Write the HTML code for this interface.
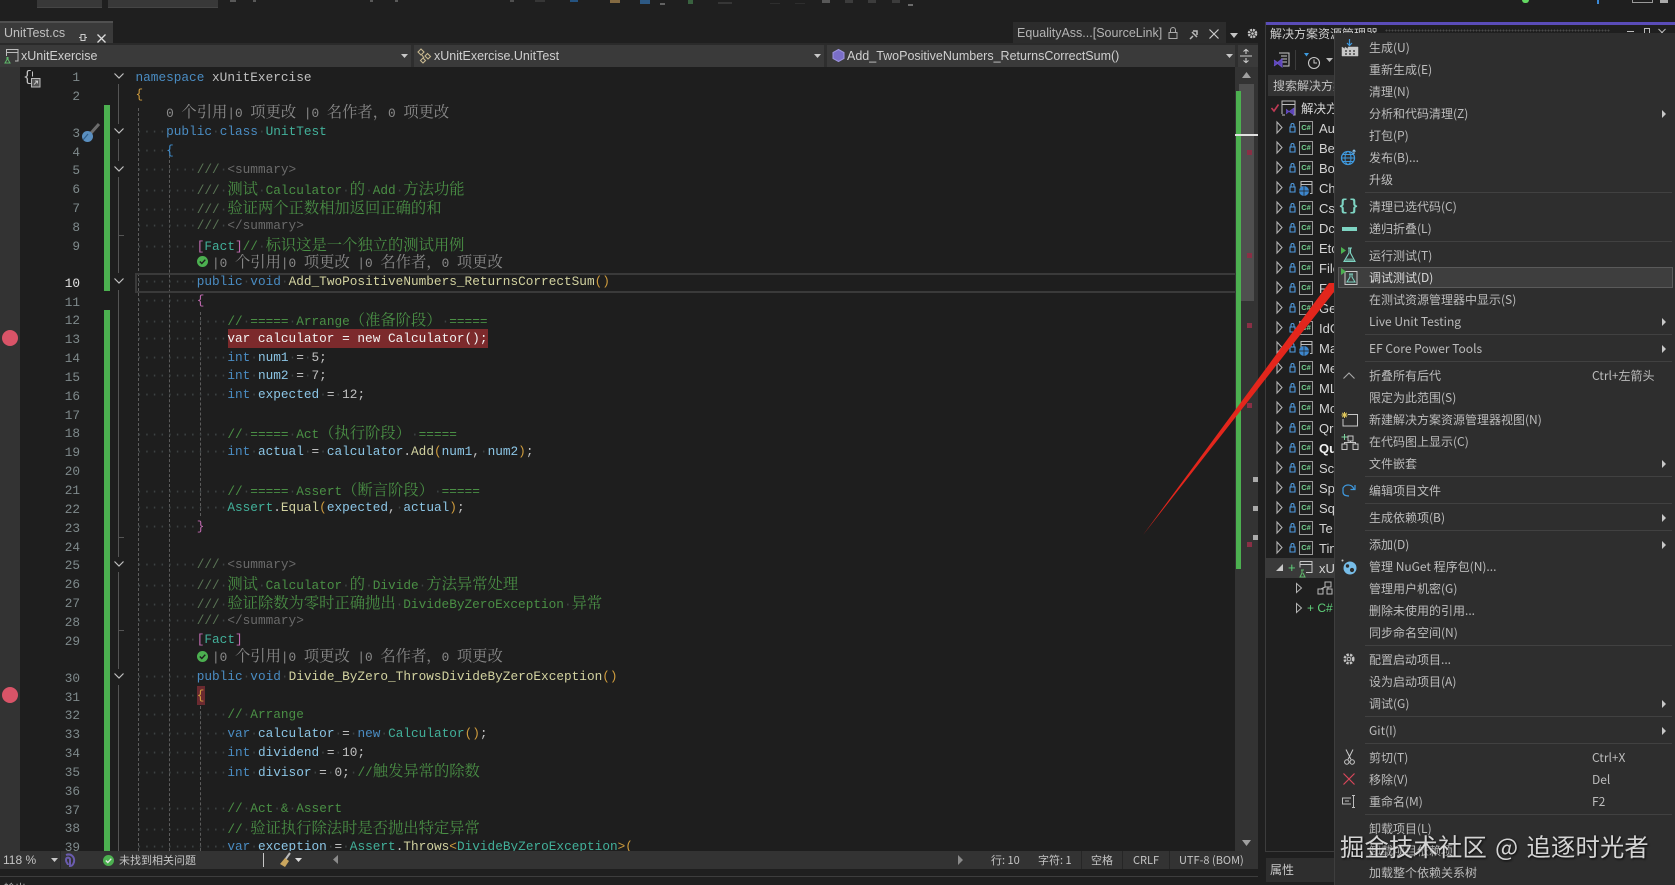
<!DOCTYPE html>
<html lang="zh"><head><meta charset="utf-8"><title>UnitTest.cs</title>
<style>
html,body{margin:0;padding:0;background:#1f1f1f}
#p{position:relative;width:1675px;height:885px;overflow:hidden;background:#1f1f1f;font-family:"Liberation Sans","Noto Sans CJK SC",sans-serif;color:#ccc}
.a{position:absolute}
svg{position:absolute;overflow:visible}
.l{position:absolute;left:135.5px;height:19px;margin-top:-1px;font:12.75px/19px "Liberation Mono","Noto Serif CJK SC",monospace;white-space:pre;color:#c0c0c0;text-spacing-trim:space-all}
.l i{font:15.3px/19px "Noto Serif CJK SC","Noto Sans CJK SC",serif;font-style:normal}
.l b{font-weight:normal;color:#3d4243}
.k{color:#4a8cc2}.t{color:#42b09a}.v{color:#8cc6e6}.m{color:#d2d2a0}.g{color:#4a8f45}.d{color:#5a7555}.x{color:#6a6a6a}.o{color:#cf9c3d}.q{color:#c06ab0}.u{color:#3f8fd0}.w{color:#c0c0c0}
.n{position:absolute;left:40px;width:40px;text-align:right;margin-top:.5px;font:12.75px/19px "Liberation Mono",monospace;color:#7f8a8c}
.z{color:#8a8a8a!important}
.z i{color:#8a8a8a}
.mi{position:absolute;left:1369px;height:22px;font:12px/22px "Noto Sans CJK SC","Liberation Sans",sans-serif;color:#bcbcbc;white-space:pre}
.sc{position:absolute;left:1592px;height:22px;font:12px/22px "Noto Sans CJK SC","Liberation Sans",sans-serif;color:#bcbcbc}
.ar{position:absolute;left:1662px;width:0;height:0;border-left:4px solid #c8c8c8;border-top:4px solid transparent;border-bottom:4px solid transparent}
.sp{position:absolute;left:1365px;width:307px;height:1px;background:#414141}
.tr{position:absolute;left:1319px;height:20px;margin-top:1px;font:13px/20px "Liberation Sans","Noto Sans CJK SC",sans-serif;color:#d4d4d4}
.cs{position:absolute;left:1299px;width:12px;height:12px;border:1px solid #9a9a9a;font:bold 7.5px/12px "Liberation Sans",sans-serif;color:#74d08e;text-align:center}
.st{position:absolute;font:11px/18px "Noto Sans CJK SC","Liberation Sans",sans-serif;color:#c4c4c4;white-space:pre;top:851px}
</style></head><body><div id="p">

<!-- top toolbar remnants -->
<div class="a" style="left:37px;top:0;width:65px;height:7px;background:#383838;border-bottom:1px solid #454545"></div>
<div class="a" style="left:108px;top:0;width:110px;height:7px;background:#383838;border-bottom:1px solid #454545"></div>
<div style="opacity:.55">
<div class="a" style="left:230px;top:0;width:6px;height:2px;background:#8a8a8a"></div>
<div class="a" style="left:253px;top:0;width:3px;height:2px;background:#8a8a8a"></div>
<div class="a" style="left:370px;top:0;width:3px;height:2px;background:#8a8a8a"></div>
<div class="a" style="left:395px;top:0;width:3px;height:2px;background:#8a8a8a"></div>
<div class="a" style="left:510px;top:0;width:4px;height:2px;background:#777"></div>
<div class="a" style="left:535px;top:0;width:10px;height:2px;background:#4a4a4a"></div>
<div class="a" style="left:570px;top:0;width:8px;height:2px;background:#2a7fd0"></div>
<div class="a" style="left:610px;top:0;width:10px;height:3px;background:#d8a860"></div>
<div class="a" style="left:640px;top:0;width:10px;height:4px;background:#3a8ad8"></div>
<div class="a" style="left:660px;top:3px;width:5px;height:2px;background:#999"></div>
<div class="a" style="left:688px;top:0;width:5px;height:4px;background:#4f9a5a"></div>
<div class="a" style="left:718px;top:2px;width:14px;height:2px;background:#4a4a4a"></div>
<div class="a" style="left:770px;top:3px;width:10px;height:1px;background:#3c3c3c"></div>
<div class="a" style="left:795px;top:3px;width:10px;height:1px;background:#3c3c3c"></div>
<div class="a" style="left:822px;top:0;width:8px;height:3px;background:#888"></div>
<div class="a" style="left:845px;top:0;width:8px;height:3px;background:#555"></div>
<div class="a" style="left:868px;top:0;width:8px;height:3px;background:#555"></div>
<div class="a" style="left:892px;top:0;width:8px;height:3px;background:#555"></div>
<div class="a" style="left:908px;top:4px;width:5px;height:2px;background:#aaa"></div>
</div>
<div class="a" style="left:1522px;top:0;width:7px;height:3px;background:#63d862;border-radius:0 0 4px 4px"></div>
<div class="a" style="left:1597px;top:0;width:2px;height:4px;background:#3a8ad8"></div>
<div class="a" style="left:1632px;top:0;width:19px;height:2px;border:1px solid #999;border-top:0"></div>
<div class="a" style="left:1660px;top:0;width:8px;height:3px;background:#aaa"></div>

<!-- tabs -->
<div class="a" style="left:0;top:21px;width:113px;height:22px;background:#3a3a3a;border-top:2px solid #505050;box-sizing:border-box"></div>
<div class="a" style="left:4px;top:21px;height:24px;font:12.5px/24px 'Liberation Sans',sans-serif;color:#c0c0c0">UnitTest.cs</div>
<svg style="left:78px;top:33px" width="9" height="9"><path d="M1 4.5h2M3 1.5v6h4v-6zM7 4.5h2" fill="none" stroke="#ccc" stroke-width="1"/></svg>
<svg style="left:97px;top:34px" width="9" height="9"><path d="M.5.5l8 8M8.5.5l-8 8" stroke="#ddd" stroke-width="1.3"/></svg>
<div class="a" style="left:1013px;top:22px;width:213px;height:23px;background:#2c2c2c"></div>
<div class="a" style="left:1017px;top:21px;height:24px;font:12.5px/24px 'Liberation Sans',sans-serif;color:#b4b4b4;white-space:pre">EqualityAss...[SourceLink]</div>
<svg style="left:1168px;top:27px" width="10" height="12"><path d="M2.5 5V3a2.500 2.500 0 0 1 5 0v2M1 5.500h8v6H1z" fill="none" stroke="#aaa"/></svg>
<svg style="left:1189px;top:29px" width="11" height="11"><path d="M1 10l3-3M3 3l5 5M4 2h4v4" fill="none" stroke="#bbb" stroke-width="1.500"/></svg>
<svg style="left:1209px;top:29px" width="10" height="10"><path d="M.5.5l9 9M9.500.5l-9 9" stroke="#ccc" stroke-width="1.200"/></svg>
<svg style="left:1230px;top:33px" width="8" height="5"><path d="M0 0h8L4 5z" fill="#c4c4c4"/></svg>
<svg style="left:1247px;top:28px" width="11" height="11"><circle cx="5.500" cy="5.500" r="3.500" fill="none" stroke="#c4c4c4" stroke-width="2.600" stroke-dasharray="2 .8"/><circle cx="5.500" cy="5.500" r="1.300" fill="#c4c4c4"/></svg>

<!-- nav bar -->
<div class="a" style="left:0;top:43px;width:1258px;height:2px;background:#2a2a2a"></div>
<div class="a" style="left:0;top:45px;width:1258px;height:22px;background:#3a3a3a"></div>
<div class="a" style="left:411px;top:45px;width:3px;height:22px;background:#2e2e2e"></div>
<div class="a" style="left:824px;top:45px;width:3px;height:22px;background:#2e2e2e"></div>
<div class="a" style="left:1235px;top:45px;width:3px;height:22px;background:#2e2e2e"></div>
<svg style="left:3px;top:48px" width="16" height="16"><path d="M3.500 8V1.500h11.500v11.500h-3M3.500 4.500H15" fill="none" stroke="#bdbdbd"/><path d="M4 9v2.500L2 15h5L5 11.500V9" fill="none" stroke="#5fb86b"/></svg>
<div class="a" style="left:21px;top:45px;font:12.5px/22px 'Liberation Sans',sans-serif;color:#cfcfcf">xUnitExercise</div>
<svg style="left:401px;top:54px" width="7" height="4"><path d="M0 0h7L3.500 4z" fill="#c8c8c8"/></svg>
<svg style="left:416px;top:47px" width="17" height="17"><path d="M2 5l3-3 3 3-3 3zM9 9l2.500-2.500 3 3-2.500 2.500zM7 11l2.500 2.500L7 16l-2.500-2.500zM6 8l2 3" fill="none" stroke="#c8b890" stroke-width="1.100"/></svg>
<div class="a" style="left:434px;top:45px;font:12.5px/22px 'Liberation Sans',sans-serif;color:#cfcfcf">xUnitExercise.UnitTest</div>
<svg style="left:814px;top:54px" width="7" height="4"><path d="M0 0h7L3.500 4z" fill="#c8c8c8"/></svg>
<svg style="left:831px;top:48px" width="15" height="15"><path d="M7.500 1.500l5.500 3v6l-5.500 3-5.500-3v-6z" fill="#7a6ec8" stroke="#9d94dc"/></svg>
<div class="a" style="left:847px;top:45px;font:12.5px/22px 'Liberation Sans',sans-serif;color:#cfcfcf;white-space:pre">Add_TwoPositiveNumbers_ReturnsCorrectSum()</div>
<svg style="left:1226px;top:54px" width="7" height="4"><path d="M0 0h7L3.500 4z" fill="#c8c8c8"/></svg>
<svg style="left:1240px;top:49px" width="12" height="14"><path d="M0 7h12M6 0v5M6 9v5M3.500 2.500L6 .5l2.500 2M3.500 11.500L6 13.500l2.500-2" fill="none" stroke="#ccc" stroke-width="1.100"/></svg>

<!-- editor -->
<div class="a" style="left:0;top:67px;width:20px;height:784px;background:#333"></div>
<div class="a" style="left:20px;top:67px;width:1215px;height:784px;background:#1e1e1e"></div>
<div class="a" style="left:104px;top:105px;width:6px;height:186px;background:#4cb050"></div>
<div class="a" style="left:104px;top:310px;width:6px;height:541px;background:#4cb050"></div>

<!-- guides -->
<div class="a" style="left:138px;top:108px;height:743px;border-left:1px dashed #5c5c5c"></div>
<div class="a" style="left:169px;top:150px;height:701px;border-left:1px dashed #5c5c5c"></div>
<div class="a" style="left:200px;top:312px;height:204px;border-left:1px dashed #5c5c5c"></div>
<div class="a" style="left:200px;top:706px;height:145px;border-left:1px dashed #5c5c5c"></div>

<!-- fold lines -->
<div class="a" style="left:118px;top:84px;width:1px;height:40px;background:#555"></div>
<div class="a" style="left:118px;top:139px;width:1px;height:22px;background:#555"></div>
<div class="a" style="left:118px;top:177px;width:1px;height:96px;background:#555"></div>
<div class="a" style="left:118px;top:235px;width:6px;height:1px;background:#555"></div>
<div class="a" style="left:118px;top:290px;width:1px;height:267px;background:#555"></div>
<div class="a" style="left:118px;top:537px;width:6px;height:1px;background:#555"></div>
<div class="a" style="left:118px;top:572px;width:1px;height:97px;background:#555"></div>
<div class="a" style="left:118px;top:630px;width:6px;height:1px;background:#555"></div>
<div class="a" style="left:118px;top:685px;width:1px;height:166px;background:#555"></div>
<svg style="left:114px;top:73px" width="10" height="6"><path d="M.5.5l4.500 4.500 4.500-4.500" fill="none" stroke="#c0c0c0" stroke-width="1.200"/></svg>
<svg style="left:114px;top:128px" width="10" height="6"><path d="M.5.5l4.500 4.500 4.500-4.500" fill="none" stroke="#c0c0c0" stroke-width="1.200"/></svg>
<svg style="left:114px;top:166px" width="10" height="6"><path d="M.5.5l4.500 4.500 4.500-4.500" fill="none" stroke="#c0c0c0" stroke-width="1.200"/></svg>
<svg style="left:114px;top:278px" width="10" height="6"><path d="M.5.5l4.500 4.500 4.500-4.500" fill="none" stroke="#c0c0c0" stroke-width="1.200"/></svg>
<svg style="left:114px;top:561px" width="10" height="6"><path d="M.5.5l4.500 4.500 4.500-4.500" fill="none" stroke="#c0c0c0" stroke-width="1.200"/></svg>
<svg style="left:114px;top:673px" width="10" height="6"><path d="M.5.5l4.500 4.500 4.500-4.500" fill="none" stroke="#c0c0c0" stroke-width="1.200"/></svg>

<!-- margin icons -->
<div class="a" style="left:23px;top:69px;font:15px/18px 'Liberation Mono',monospace;color:#c4c4c4">{</div>
<svg style="left:31px;top:71px" width="10" height="17"><path d="M1.500 5.500V.5" stroke="#c4c4c4" fill="none"/><rect x=".5" y="7.500" width="8.500" height="8.500" fill="#555" stroke="#bbb"/><path d="M3 13.500l3.500-3.500M4 10h2.500v2.500" fill="none" stroke="#ddd" stroke-width=".8"/></svg>
<svg style="left:80px;top:122px" width="21" height="21"><path d="M19 2l-8 9" stroke="#6c6c6c" stroke-width="3"/><circle cx="7.500" cy="14.500" r="5.500" fill="#5a8fc0"/><path d="M3 18l5-6" stroke="#2e5e8a" stroke-width="1.200"/></svg>
<div class="a" style="left:2px;top:329.500px;width:16px;height:16px;border-radius:50%;background:#d95468"></div>
<div class="a" style="left:2px;top:687px;width:16px;height:16px;border-radius:50%;background:#d95468"></div>

<!-- highlights -->
<div class="a" style="left:134.500px;top:272.500px;width:1099px;height:16px;border:2px solid #3a3a3a"></div>
<div class="a" style="left:227.500px;top:328.500px;width:260px;height:19px;background:#7c2a2c"></div>
<div class="a" style="left:197px;top:686px;width:8px;height:19px;background:#6b2a30"></div>

<!-- line numbers -->
<div class="n" style="top:67.500px">1</div><div class="n" style="top:86.350px">2</div><div class="n" style="top:123.200px">3</div><div class="n" style="top:142.050px">4</div><div class="n" style="top:160.900px">5</div><div class="n" style="top:179.750px">6</div><div class="n" style="top:198.600px">7</div><div class="n" style="top:217.450px">8</div><div class="n" style="top:236.300px">9</div><div class="n" style="top:273.150px;color:#e4e4e4">10</div><div class="n" style="top:292px">11</div><div class="n" style="top:310.850px">12</div><div class="n" style="top:329.700px">13</div><div class="n" style="top:348.550px">14</div><div class="n" style="top:367.400px">15</div><div class="n" style="top:386.250px">16</div><div class="n" style="top:405.100px">17</div><div class="n" style="top:423.950px">18</div><div class="n" style="top:442.800px">19</div><div class="n" style="top:461.650px">20</div><div class="n" style="top:480.500px">21</div><div class="n" style="top:499.350px">22</div><div class="n" style="top:518.200px">23</div><div class="n" style="top:537.050px">24</div><div class="n" style="top:555.900px">25</div><div class="n" style="top:574.750px">26</div><div class="n" style="top:593.600px">27</div><div class="n" style="top:612.450px">28</div><div class="n" style="top:631.300px">29</div><div class="n" style="top:668.150px">30</div><div class="n" style="top:687px">31</div><div class="n" style="top:705.850px">32</div><div class="n" style="top:724.700px">33</div><div class="n" style="top:743.550px">34</div><div class="n" style="top:762.400px">35</div><div class="n" style="top:781.250px">36</div><div class="n" style="top:800.100px">37</div><div class="n" style="top:818.950px">38</div><div class="n" style="top:837.800px">39</div>

<!-- code -->
<div class="l" style="top:67.500px;margin-top:0"><span class="k">namespace</span> xUnitExercise</div>
<div class="l" style="top:86.350px"><span class="o">{</span></div>
<div class="l z" style="top:102.200px;margin-top:0">    0 <i>个引用</i>|0 <i>项更改</i> |0 <i>名作者，</i>0 <i>项更改</i></div>
<div class="l" style="top:123.200px"><b>····</b><span class="k">public</span><b>·</b><span class="k">class</span><b>·</b><span class="t">UnitTest</span></div>
<div class="l" style="top:142.050px"><b>····</b><span class="u">{</span></div>
<div class="l" style="top:160.900px"><b>········</b><span class="d">///</span><b>·</b><span class="x">&lt;summary&gt;</span></div>
<div class="l g" style="top:179.750px"><b>········</b><span class="d">///</span><b>·</b><i>测试</i><b>·</b>Calculator<b>·</b><i>的</i><b>·</b>Add<b>·</b><i>方法功能</i></div>
<div class="l g" style="top:198.600px"><b>········</b><span class="d">///</span><b>·</b><i>验证两个正数相加返回正确的和</i></div>
<div class="l" style="top:217.450px"><b>········</b><span class="d">///</span><b>·</b><span class="x">&lt;/summary&gt;</span></div>
<div class="l" style="top:236.300px"><b>········</b><span class="q">[</span><span class="t">Fact</span><span class="q">]</span><span class="g">//<b>·</b><i>标识这是一个独立的测试用例</i></span></div>
<svg style="left:197px;top:256px" width="11" height="11"><circle cx="5.500" cy="5.500" r="5.500" fill="#4cb050"/><path d="M2.800 5.500l2 2 3.500-3.800" fill="none" stroke="#1e1e1e" stroke-width="1.400"/></svg>
<div class="l z" style="top:252.500px">          |0 <i>个引用</i>|0 <i>项更改</i> |0 <i>名作者，</i>0 <i>项更改</i></div>
<div class="l" style="top:273.150px"><b>········</b><span class="k">public</span><b>·</b><span class="k">void</span><b>·</b><span class="m">Add_TwoPositiveNumbers_ReturnsCorrectSum</span><span class="o">()</span></div>
<div class="l" style="top:292px"><b>········</b><span class="q">{</span></div>
<div class="l g" style="top:310.850px"><b>············</b>//<b>·</b>=====<b>·</b>Arrange<i>（准备阶段）</i><b>·</b>=====</div>
<div class="l" style="top:329.700px"><b>············</b><span style="color:#f2f2f2">var calculator = new Calculator();</span></div>
<div class="l" style="top:348.550px"><b>············</b><span class="k">int</span><b>·</b><span class="v">num1</span><b>·</b>=<b>·</b>5;</div>
<div class="l" style="top:367.400px"><b>············</b><span class="k">int</span><b>·</b><span class="v">num2</span><b>·</b>=<b>·</b>7;</div>
<div class="l" style="top:386.250px"><b>············</b><span class="k">int</span><b>·</b><span class="v">expected</span><b>·</b>=<b>·</b>12;</div>
<div class="l g" style="top:423.950px"><b>············</b>//<b>·</b>=====<b>·</b>Act<i>（执行阶段）</i><b>·</b>=====</div>
<div class="l" style="top:442.800px"><b>············</b><span class="k">int</span><b>·</b><span class="v">actual</span><b>·</b>=<b>·</b><span class="v">calculator</span>.<span class="m">Add</span><span class="o">(</span><span class="v">num1</span>,<b>·</b><span class="v">num2</span><span class="o">)</span>;</div>
<div class="l g" style="top:480.500px"><b>············</b>//<b>·</b>=====<b>·</b>Assert<i>（断言阶段）</i><b>·</b>=====</div>
<div class="l" style="top:499.350px"><b>············</b><span class="t">Assert</span>.<span class="m">Equal</span><span class="o">(</span><span class="v">expected</span>,<b>·</b><span class="v">actual</span><span class="o">)</span>;</div>
<div class="l" style="top:518.200px"><b>········</b><span class="q">}</span></div>
<div class="l" style="top:555.900px"><b>········</b><span class="d">///</span><b>·</b><span class="x">&lt;summary&gt;</span></div>
<div class="l g" style="top:574.750px"><b>········</b><span class="d">///</span><b>·</b><i>测试</i><b>·</b>Calculator<b>·</b><i>的</i><b>·</b>Divide<b>·</b><i>方法异常处理</i></div>
<div class="l g" style="top:593.600px"><b>········</b><span class="d">///</span><b>·</b><i>验证除数为零时正确抛出</i><b>·</b>DivideByZeroException<b>·</b><i>异常</i></div>
<div class="l" style="top:612.450px"><b>········</b><span class="d">///</span><b>·</b><span class="x">&lt;/summary&gt;</span></div>
<div class="l" style="top:631.300px"><b>········</b><span class="q">[</span><span class="t">Fact</span><span class="q">]</span></div>
<svg style="left:197px;top:651px" width="11" height="11"><circle cx="5.500" cy="5.500" r="5.500" fill="#4cb050"/><path d="M2.800 5.500l2 2 3.500-3.800" fill="none" stroke="#1e1e1e" stroke-width="1.400"/></svg>
<div class="l z" style="top:647.200px">          |0 <i>个引用</i>|0 <i>项更改</i> |0 <i>名作者，</i>0 <i>项更改</i></div>
<div class="l" style="top:668.150px"><b>········</b><span class="k">public</span><b>·</b><span class="k">void</span><b>·</b><span class="m">Divide_ByZero_ThrowsDivideByZeroException</span><span class="o">()</span></div>
<div class="l" style="top:687px"><b>········</b><span class="o">{</span></div>
<div class="l g" style="top:705.850px"><b>············</b>//<b>·</b>Arrange</div>
<div class="l" style="top:724.700px"><b>············</b><span class="k">var</span><b>·</b><span class="v">calculator</span><b>·</b>=<b>·</b><span class="k">new</span><b>·</b><span class="t">Calculator</span><span class="o">()</span>;</div>
<div class="l" style="top:743.550px"><b>············</b><span class="k">int</span><b>·</b><span class="v">dividend</span><b>·</b>=<b>·</b>10;</div>
<div class="l" style="top:762.400px"><b>············</b><span class="k">int</span><b>·</b><span class="v">divisor</span><b>·</b>=<b>·</b>0;<b>·</b><span class="g">//<i>触发异常的除数</i></span></div>
<div class="l g" style="top:800.100px"><b>············</b>//<b>·</b>Act<b>·</b>&amp;<b>·</b>Assert</div>
<div class="l g" style="top:818.950px"><b>············</b>//<b>·</b><i>验证执行除法时是否抛出特定异常</i></div>
<div class="l" style="top:837.800px"><b>············</b><span class="k">var</span><b>·</b><span class="v">exception</span><b>·</b>=<b>·</b><span class="t">Assert</span>.<span class="m">Throws</span><span class="o">&lt;</span><span class="t">DivideByZeroException</span><span class="o">&gt;(</span></div>

<!-- scrollbar -->
<div class="a" style="left:1235px;top:67px;width:23px;height:784px;background:#333"></div>
<div class="a" style="left:1239px;top:84px;width:15px;height:217px;background:#4f4f4f"></div>
<div class="a" style="left:1236px;top:90.500px;width:5px;height:478px;background:#4cb050"></div>
<div class="a" style="left:1235px;top:134px;width:23px;height:2px;background:#e0e0e0"></div>
<div class="a" style="left:1247px;top:150px;width:5px;height:5px;background:#8a2f45"></div>
<div class="a" style="left:1247px;top:253px;width:5px;height:5px;background:#8a2f45"></div>
<div class="a" style="left:1247px;top:323px;width:5px;height:5px;background:#8a2f45"></div>
<div class="a" style="left:1247px;top:403px;width:5px;height:5px;background:#8a2f45"></div>
<div class="a" style="left:1247px;top:542px;width:5px;height:5px;background:#8a2f45"></div>
<div class="a" style="left:1253px;top:477px;width:5px;height:5px;background:#aaa"></div>
<div class="a" style="left:1253px;top:506px;width:5px;height:5px;background:#aaa"></div>
<div class="a" style="left:1253px;top:535px;width:5px;height:5px;background:#aaa"></div>
<svg style="left:1242px;top:72px" width="9" height="6"><path d="M0 6h9L4.500 0z" fill="#a0a0a0"/></svg>
<svg style="left:1242px;top:840px" width="9" height="6"><path d="M0 0h9L4.500 6z" fill="#a0a0a0"/></svg>

<!-- status bar -->
<div class="a" style="left:0;top:851px;width:1258px;height:18px;background:#333"></div>
<div class="a" style="left:60px;top:851px;width:1px;height:18px;background:#262626"></div>
<div class="st" style="left:3px;font-family:'Liberation Sans',sans-serif;font-size:12px">118 %</div>
<svg style="left:51px;top:858px" width="7" height="4"><path d="M0 0h7L3.500 4z" fill="#c8c8c8"/></svg>
<svg style="left:63px;top:853px" width="13" height="14"><path d="M3 2c5-2 9 2 8 7-1 3-2 4-4 4V6C6 4 3 4 3 7c0 3 2 3 2 5" fill="none" stroke="#6a5cae" stroke-width="2"/></svg>
<svg style="left:102.500px;top:854.500px" width="11" height="11"><circle cx="5.500" cy="5.500" r="5.500" fill="#4cb050"/><path d="M2.800 5.500l2 2 3.500-3.800" fill="none" stroke="#e8e8e8" stroke-width="1.300"/></svg>
<div class="st" style="left:119px">未找到相关问题</div>
<div class="a" style="left:263px;top:853px;width:1px;height:14px;background:#c8c8c8"></div>
<svg style="left:278px;top:852px" width="14" height="16"><path d="M12 1L7 8" stroke="#bbb" stroke-width="2"/><path d="M7 6l4 3-4 6-5-3z" fill="#caa65e"/></svg>
<svg style="left:295px;top:858px" width="7" height="4"><path d="M0 0h7L3.500 4z" fill="#ddd"/></svg>
<svg style="left:333px;top:855px" width="5" height="9"><path d="M5 0v9L0 4.500z" fill="#8a8a8a"/></svg>
<svg style="left:958px;top:855px" width="5" height="10"><path d="M0 0v10l5-5z" fill="#8a8a8a"/></svg>
<div class="st" style="left:991px">行: 10</div>
<div class="st" style="left:1038px">字符: 1</div>
<div class="a" style="left:1081px;top:851px;width:1px;height:18px;background:#262626"></div>
<div class="st" style="left:1091px">空格</div>
<div class="a" style="left:1122px;top:851px;width:1px;height:18px;background:#262626"></div>
<div class="st" style="left:1133px">CRLF</div>
<div class="a" style="left:1169px;top:851px;width:1px;height:18px;background:#262626"></div>
<div class="st" style="left:1179px">UTF-8 (BOM)</div>
<div class="a" style="left:0;top:876px;width:1258px;height:1px;background:#3d3d3d"></div>
<div class="a" style="left:4px;top:881px;font:11px/14px 'Noto Sans CJK SC',sans-serif;color:#aaa">输出</div>

<!-- solution explorer -->
<div class="a" style="left:1265px;top:22px;width:1px;height:830px;background:#3c3c3c"></div>
<div class="a" style="left:1266px;top:22px;width:409px;height:3px;background:#5a4cb8"></div>
<div class="a" style="left:1270px;top:22px;font:12px/24px 'Noto Sans CJK SC',sans-serif;color:#d0d0d0;white-space:pre">解决方案资源管理器</div>
<div class="a" style="left:1385px;top:29px;width:225px;height:3px;background:radial-gradient(circle,#4a4a4a 1px,transparent 1px) 0 0/3px 3px"></div>
<div class="a" style="left:1627px;top:31px;width:7px;height:1px;background:#bbb"></div>
<div class="a" style="left:1644px;top:28px;width:4px;height:5px;border:1px solid #bbb"></div>
<svg style="left:1658px;top:29px" width="8" height="5"><path d="M.5 0l7 7M7.500 0l-7 7" stroke="#bbb"/></svg>
<div class="a" style="left:1266px;top:45px;width:68px;height:28px;background:#1f1f1f"></div>
<svg style="left:1272px;top:51px" width="20" height="20"><path d="M7 2h10v13h-6" fill="none" stroke="#c8c8c8"/><path d="M9 5h6M9 8h6M9 11h6" stroke="#c8c8c8"/><path d="M2 9l4 3-4 3M10 8l-5 4 5 4z" fill="#5d45b8" stroke="#6a52c8"/></svg>
<div class="a" style="left:1295px;top:50px;width:1px;height:20px;background:#3c3c3c"></div>
<svg style="left:1303px;top:51px" width="20" height="20"><path d="M1 2h5L3.500 5.500z" fill="#3d9be0"/><circle cx="11" cy="12" r="5.500" fill="none" stroke="#c8c8c8" stroke-width="1.100"/><path d="M11 8.500V12h3" fill="none" stroke="#c8c8c8"/></svg>
<svg style="left:1326px;top:58px" width="7" height="4"><path d="M0 0h7L3.500 4z" fill="#bbb"/></svg>
<div class="a" style="left:1268px;top:75px;width:66px;height:21px;background:#333"></div>
<div class="a" style="left:1273px;top:74px;font:12px/23px 'Noto Sans CJK SC',sans-serif;color:#c0c0c0;white-space:pre">搜索解决方案</div>
<svg style="left:1271px;top:104px" width="8" height="8"><path d="M.5 4l2.500 3L7.500.5" fill="none" stroke="#c03a55" stroke-width="1.600"/></svg>
<svg style="left:1280px;top:100px" width="20" height="16"><path d="M2 14V1h13v14h-2M2 4.500h13M2 15h3" fill="none" stroke="#bdbdbd"/><path d="M6 9l3 2.500L6 14M14 8l-5 3.500 5 3.500z" fill="#5d45b8" stroke="#6a52c8" stroke-width=".6"/></svg>
<div class="a" style="left:1301px;top:98px;font:12.500px/20px 'Noto Sans CJK SC',sans-serif;color:#d4d4d4;white-space:pre">解决方案</div>
<!-- selected row -->
<div class="a" style="left:1266px;top:558px;width:68px;height:20px;background:#3a3a3a"></div>

<svg style="left:1276px;top:122px" width="7" height="440" fill="none" stroke="#b4b4b4" stroke-width="1.100"><path d="M1 0v11l5-5.500zM1 20v11l5-5.500zM1 40v11l5-5.500zM1 60v11l5-5.500zM1 80v11l5-5.500zM1 100v11l5-5.500zM1 120v11l5-5.500zM1 140v11l5-5.500zM1 160v11l5-5.500zM1 180v11l5-5.500zM1 200v11l5-5.500zM1 220v11l5-5.500zM1 240v11l5-5.500zM1 260v11l5-5.500zM1 280v11l5-5.500zM1 300v11l5-5.500zM1 320v11l5-5.500zM1 340v11l5-5.500zM1 360v11l5-5.500zM1 380v11l5-5.500zM1 400v11l5-5.500zM1 420v11l5-5.500z"/></svg>
<svg style="left:1289px;top:122px" width="7" height="440" fill="none" stroke="#4f9be0" stroke-width="1.100"><path d="M1 5h5v5H1zM2 5V3a1.500 1.500 0 0 1 3 0v2M1 25h5v5H1zM2 25v-2a1.500 1.500 0 0 1 3 0v2M1 45h5v5H1zM2 45v-2a1.500 1.500 0 0 1 3 0v2M1 65h5v5H1zM2 65v-2a1.500 1.500 0 0 1 3 0v2M1 85h5v5H1zM2 85v-2a1.500 1.500 0 0 1 3 0v2M1 105h5v5H1zM2 105v-2a1.500 1.500 0 0 1 3 0v2M1 125h5v5H1zM2 125v-2a1.500 1.500 0 0 1 3 0v2M1 145h5v5H1zM2 145v-2a1.500 1.500 0 0 1 3 0v2M1 165h5v5H1zM2 165v-2a1.500 1.500 0 0 1 3 0v2M1 185h5v5H1zM2 185v-2a1.500 1.500 0 0 1 3 0v2M1 205h5v5H1zM2 205v-2a1.500 1.500 0 0 1 3 0v2M1 225h5v5H1zM2 225v-2a1.500 1.500 0 0 1 3 0v2M1 245h5v5H1zM2 245v-2a1.500 1.500 0 0 1 3 0v2M1 265h5v5H1zM2 265v-2a1.500 1.500 0 0 1 3 0v2M1 285h5v5H1zM2 285v-2a1.500 1.500 0 0 1 3 0v2M1 305h5v5H1zM2 305v-2a1.500 1.500 0 0 1 3 0v2M1 325h5v5H1zM2 325v-2a1.500 1.500 0 0 1 3 0v2M1 345h5v5H1zM2 345v-2a1.500 1.500 0 0 1 3 0v2M1 365h5v5H1zM2 365v-2a1.500 1.500 0 0 1 3 0v2M1 385h5v5H1zM2 385v-2a1.500 1.500 0 0 1 3 0v2M1 405h5v5H1zM2 405v-2a1.500 1.500 0 0 1 3 0v2M1 425h5v5H1zM2 425v-2a1.500 1.500 0 0 1 3 0v2"/></svg>

<div class="cs" style="top:121px">C#</div><div class="tr" style="top:118px">Aut</div>
<div class="cs" style="top:141px">C#</div><div class="tr" style="top:138px">Be</div>
<div class="cs" style="top:161px">C#</div><div class="tr" style="top:158px">Bo</div>
<svg style="left:1298px;top:180px" width="16" height="16"><path d="M3 8V1.500h11v12h-2M3 4.500h11" fill="none" stroke="#bdbdbd"/><circle cx="6" cy="11" r="5" fill="#3d86cc"/><path d="M1 11h10M6 6v10" stroke="#1e1e1e" stroke-width=".7"/></svg><div class="tr" style="top:178px">Ch</div>
<div class="cs" style="top:201px">C#</div><div class="tr" style="top:198px">Cs</div>
<div class="cs" style="top:221px">C#</div><div class="tr" style="top:218px">Dc</div>
<div class="cs" style="top:241px">C#</div><div class="tr" style="top:238px">Etc</div>
<div class="cs" style="top:261px">C#</div><div class="tr" style="top:258px">File</div>
<div class="cs" style="top:281px">C#</div><div class="tr" style="top:278px">Fu</div>
<div class="cs" style="top:301px">C#</div><div class="tr" style="top:298px">Ge</div>
<div class="cs" style="top:321px">C#</div><div class="tr" style="top:318px">IdG</div>
<svg style="left:1298px;top:340px" width="16" height="16"><path d="M3 8V1.500h11v12h-2M3 4.500h11" fill="none" stroke="#bdbdbd"/><circle cx="6" cy="11" r="5" fill="#3d86cc"/><path d="M1 11h10M6 6v10" stroke="#1e1e1e" stroke-width=".7"/></svg><div class="tr" style="top:338px">Ma</div>
<div class="cs" style="top:361px">C#</div><div class="tr" style="top:358px">Me</div>
<div class="cs" style="top:381px">C#</div><div class="tr" style="top:378px">ML</div>
<div class="cs" style="top:401px">C#</div><div class="tr" style="top:398px">Mo</div>
<div class="cs" style="top:421px">C#</div><div class="tr" style="top:418px">Qr</div>
<div class="cs" style="top:441px">C#</div><div class="tr" style="top:438px;font-weight:bold;color:#f0f0f0">Qu</div>
<div class="cs" style="top:461px">C#</div><div class="tr" style="top:458px">Sc</div>
<div class="cs" style="top:481px">C#</div><div class="tr" style="top:478px">Sp</div>
<div class="cs" style="top:501px">C#</div><div class="tr" style="top:498px">Sq</div>
<div class="cs" style="top:521px">C#</div><div class="tr" style="top:518px">Te</div>
<div class="cs" style="top:541px">C#</div><div class="tr" style="top:538px">Tin</div>
<svg style="left:1276px;top:564px" width="8" height="8"><path d="M7 0v7H0z" fill="#c8c8c8"/></svg>
<div class="a" style="left:1288px;top:558px;font:13px/20px 'Liberation Sans',sans-serif;color:#5fcf7a">+</div>
<svg style="left:1298px;top:560px" width="16" height="18"><path d="M2 1.500h12v11H8M2 1.500v6M2 4.500h12" fill="none" stroke="#c8c8c8"/><path d="M3 10h3M4 10v3L2 17h5L5 13" fill="none" stroke="#5fb86b"/></svg>
<div class="tr" style="top:558px">xU</div>
<svg style="left:1296px;top:583px" width="6" height="10"><path d="M.5.500v9l5-4.500z" fill="none" stroke="#b4b4b4"/></svg>
<svg style="left:1317px;top:581px" width="16" height="14"><path d="M8 1h6v5H8zM1 8h5v5H1zM10 8h5v5h-5zM8 6L4 8M11 6v2" fill="none" stroke="#bbb"/></svg>
<svg style="left:1296px;top:603px" width="6" height="10"><path d="M.5.500v9l5-4.500z" fill="none" stroke="#b4b4b4"/></svg>
<div class="a" style="left:1307px;top:598px;font:12px/20px 'Liberation Sans',sans-serif;color:#5fcf7a;white-space:pre">+ C#</div>
<div class="a" style="left:1265px;top:851px;width:69px;height:1px;background:#3c3c3c"></div>
<div class="a" style="left:1266px;top:858px;width:68px;height:24px;background:#2e2e2e"></div>
<div class="a" style="left:1270px;top:858px;font:12px/24px 'Noto Sans CJK SC',sans-serif;color:#c8c8c8">属性</div>

<!-- red arrow -->
<svg style="left:0;top:0" width="1675" height="885"><polygon points="1143,535 1329,283 1338,283 1337,288" fill="#e3261c"/></svg>

<!-- context menu -->
<div class="a" style="left:1334px;top:33px;width:341px;height:852px;background:#2e2e2e;border-left:1px solid #3e3e3e;box-sizing:border-box"></div>
<div class="a" style="left:1338px;top:266.500px;width:335px;height:21px;background:#3e3e3e;border:1px solid #5a5a5a;box-sizing:border-box"></div>

<div class="mi" style="top:37px">生成(U)</div>
<div class="mi" style="top:59px">重新生成(E)</div>
<div class="mi" style="top:81px">清理(N)</div>
<div class="mi" style="top:103px">分析和代码清理(Z)</div><div class="ar" style="top:110px"></div>
<div class="mi" style="top:125px">打包(P)</div>
<div class="mi" style="top:147px">发布(B)...</div>
<div class="mi" style="top:169px">升级</div>
<div class="sp" style="top:192px"></div>
<div class="mi" style="top:196px">清理已选代码(C)</div>
<div class="mi" style="top:218px">递归折叠(L)</div>
<div class="sp" style="top:241px"></div>
<div class="mi" style="top:245px">运行测试(T)</div>
<div class="mi" style="top:267px;color:#dcdcdc">调试测试(D)</div>
<div class="mi" style="top:289px">在测试资源管理器中显示(S)</div>
<div class="mi" style="top:311px">Live Unit Testing</div><div class="ar" style="top:318px"></div>
<div class="sp" style="top:334px"></div>
<div class="mi" style="top:338px">EF Core Power Tools</div><div class="ar" style="top:345px"></div>
<div class="sp" style="top:361px"></div>
<div class="mi" style="top:365px">折叠所有后代</div><div class="sc" style="top:365px">Ctrl+左箭头</div>
<div class="mi" style="top:387px">限定为此范围(S)</div>
<div class="mi" style="top:409px">新建解决方案资源管理器视图(N)</div>
<div class="mi" style="top:431px">在代码图上显示(C)</div>
<div class="mi" style="top:453px">文件嵌套</div><div class="ar" style="top:460px"></div>
<div class="sp" style="top:476px"></div>
<div class="mi" style="top:480px">编辑项目文件</div>
<div class="sp" style="top:503px"></div>
<div class="mi" style="top:507px">生成依赖项(B)</div><div class="ar" style="top:514px"></div>
<div class="sp" style="top:530px"></div>
<div class="mi" style="top:534px">添加(D)</div><div class="ar" style="top:541px"></div>
<div class="mi" style="top:556px">管理 NuGet 程序包(N)...</div>
<div class="mi" style="top:578px">管理用户机密(G)</div>
<div class="mi" style="top:600px">删除未使用的引用...</div>
<div class="mi" style="top:622px">同步命名空间(N)</div>
<div class="sp" style="top:645px"></div>
<div class="mi" style="top:649px">配置启动项目...</div>
<div class="mi" style="top:671px">设为启动项目(A)</div>
<div class="mi" style="top:693px">调试(G)</div><div class="ar" style="top:700px"></div>
<div class="sp" style="top:716px"></div>
<div class="mi" style="top:720px">Git(I)</div><div class="ar" style="top:727px"></div>
<div class="sp" style="top:743px"></div>
<div class="mi" style="top:747px">剪切(T)</div><div class="sc" style="top:747px">Ctrl+X</div>
<div class="mi" style="top:769px">移除(V)</div><div class="sc" style="top:769px">Del</div>
<div class="mi" style="top:791px">重命名(M)</div><div class="sc" style="top:791px">F2</div>
<div class="sp" style="top:814px"></div>
<div class="mi" style="top:818px">卸载项目(L)</div>
<div class="mi" style="top:840px">卸载项目依赖项</div>
<div class="mi" style="top:862px">加载整个依赖关系树</div>

<!-- menu icons -->
<svg style="left:1341px;top:39px" width="17" height="18"><path d="M8.500 0v6M6 4l2.500 2.500L11 4" fill="none" stroke="#3f9ae0" stroke-width="1.200"/><path d="M1 8l3 2V8l3 2V8h10v9H1z" fill="#c8c8c8" stroke="#c8c8c8" stroke-width=".5"/><path d="M4 12h2M8 12h2M12 12h2M4 15h2M8 15h2M12 15h2" stroke="#2e2e2e" stroke-width="1.300"/></svg>
<svg style="left:1340px;top:149px" width="18" height="17"><circle cx="8" cy="9" r="6.500" fill="none" stroke="#3f9ae0" stroke-width="1.300"/><ellipse cx="8" cy="9" rx="3" ry="6.500" fill="none" stroke="#3f9ae0"/><path d="M1.500 9h13M2.500 5.500h11M2.500 12.500h11" stroke="#3f9ae0"/><path d="M14 5V1M12.500 2.500L14 1l1.500 1.500" fill="none" stroke="#8cc4ec"/></svg>
<div class="a" style="left:1338px;top:195px;width:22px;font:bold 16px/22px 'Liberation Mono',monospace;letter-spacing:1px;color:#7ed4c2;white-space:pre;text-align:center">{}</div>
<div class="a" style="left:1341.500px;top:227px;width:15px;height:4px;background:#7ed4c2"></div>
<svg style="left:1341px;top:246px" width="17" height="20"><path d="M0 1v7l5-3.500z" fill="#4cb050"/><path d="M7 2h4M8 2v5L3 15.500h11L9.500 7V2" fill="none" stroke="#7ed4c2" stroke-width="1.100"/><path d="M5.500 12.500h6L13 15H4z" fill="#7ed4c2" opacity=".6"/></svg>
<svg style="left:1341px;top:268px" width="17" height="19"><path d="M4 3.500h12v13H4z" fill="none" stroke="#c8c8c8"/><path d="M0 0v7l5-3.500z" fill="#4cb050"/><path d="M8 6h4M9 6v3l-3 5h8l-3-5V6" fill="none" stroke="#7ed4c2"/></svg>
<svg style="left:1343px;top:372px" width="12" height="7"><path d="M.5 6.500L6 1l5.500 5.500" fill="none" stroke="#a8a8a8" stroke-width="1.100"/></svg>
<svg style="left:1341px;top:412px" width="17" height="15"><path d="M7 2.500h9.500V14H2V7M2 5" fill="none" stroke="#c8c8c8"/><path d="M3.500 0v6M.5 3h6M1.200.8l4.600 4.400M5.800.8L1.200 5.200" stroke="#e2c95c"/></svg>
<svg style="left:1341px;top:433px" width="18" height="18"><path d="M3.500 1v6M.5 4h6" stroke="#7ed4a0"/><path d="M7 3h5v5H7zM1 11h5v5.500H1zM12 11h5v5.500h-5zM9.500 8v1.500H3.500V11M9.500 9.500h5V11" fill="none" stroke="#c8c8c8"/></svg>
<svg style="left:1341px;top:484px" width="15" height="13"><path d="M13 5.500A6 6 0 0 0 2 4v4c0 3 3 4 6 4" fill="none" stroke="#3f9ae0" stroke-width="1.200"/><path d="M9.500 5.500H14V1" fill="none" stroke="#3f9ae0" stroke-width="1.200"/></svg>
<svg style="left:1341px;top:559px" width="16" height="16"><circle cx="1.500" cy="1.500" r="1" fill="#c8c8c8"/><circle cx="9" cy="9" r="6.500" fill="#77bde8"/><circle cx="6.500" cy="7" r="1.700" fill="#2e2e2e"/><circle cx="11" cy="11" r="2.100" fill="#2e2e2e"/></svg>
<svg style="left:1342px;top:652px" width="14" height="14"><circle cx="7" cy="7" r="4.500" fill="none" stroke="#c4c4c4" stroke-width="3" stroke-dasharray="2.400 1.300"/><circle cx="7" cy="7" r="5.800" fill="none" stroke="#2e2e2e" stroke-width=".6"/><circle cx="7" cy="7" r="1.800" fill="none" stroke="#c4c4c4"/></svg>
<svg style="left:1344px;top:749px" width="11" height="16"><path d="M2 .5l5 10M9 .5l-5 10" stroke="#c8c8c8"/><circle cx="2.800" cy="13" r="2.200" fill="none" stroke="#c8c8c8"/><circle cx="8.200" cy="13" r="2.200" fill="none" stroke="#c8c8c8"/></svg>
<svg style="left:1343px;top:773px" width="12" height="12"><path d="M.5.5l11 11M11.500.5l-11 11" stroke="#d8485a" stroke-width="1.200"/></svg>
<svg style="left:1342px;top:795px" width="15" height="13"><path d="M9 3H.5v6H9M3 6h4" fill="none" stroke="#bdbdbd"/><path d="M10 .5h3M11.500.5v12M10 12.500h3" fill="none" stroke="#bdbdbd"/></svg>

<!-- watermark -->
<div class="a" style="left:1340px;top:828px;font:24.300px/36px 'Noto Sans CJK SC',sans-serif;letter-spacing:.2px;word-spacing:2.500px;color:rgba(228,228,228,.92);text-shadow:1px 1px 2px rgba(0,0,0,.85);white-space:pre">掘金技术社区 @ 追逐时光者</div>

</div></body></html>
